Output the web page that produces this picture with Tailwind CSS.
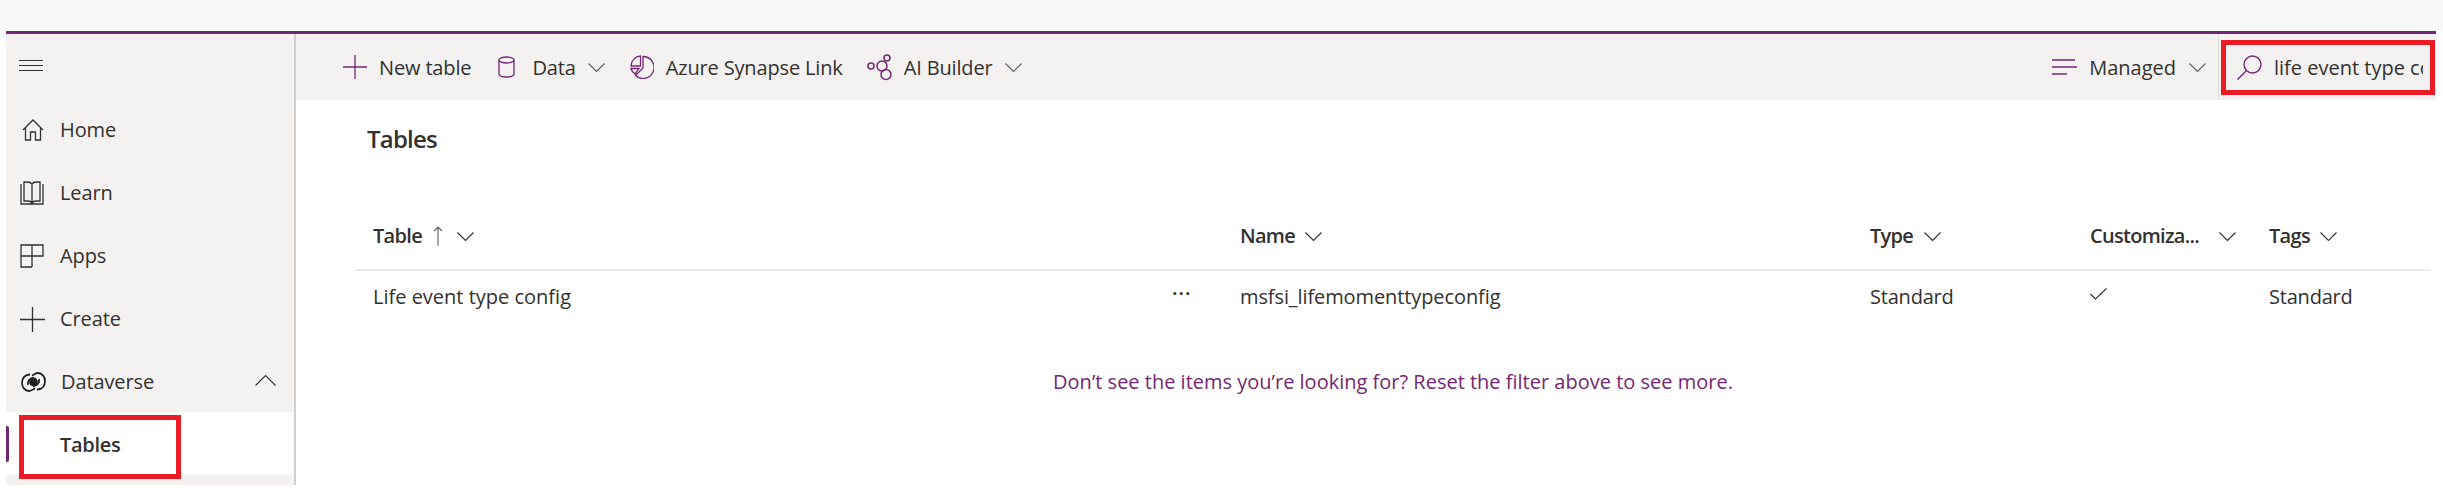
<!DOCTYPE html>
<html>
<head>
<meta charset="utf-8">
<script src="https://cdn.jsdelivr.net/npm/@tailwindcss/browser@4"></script>
</head>
<body class="bg-white">
<div class="relative w-[2443px] h-[489px] overflow-hidden bg-white text-[#323130] font-['Open_Sans','Noto_Sans',sans-serif] text-[20px] leading-[28px]">
  <div class="h-[31px] bg-[#f8f8f8]"></div>
  <div class="ml-[6px] mr-[7px] h-[3px] bg-[#742774]"></div>
  <div class="flex h-[451px] ml-[6px] mr-[7px]">
    <!-- sidebar -->
    <aside class="w-[290px] shrink-0 bg-[#f3f2f1] border-r-2 border-[#d2d0ce] flex flex-col">
      <div class="h-[63px] pl-[13px] flex items-center">
        <svg width="24" height="12" viewBox="0 0 24 12" fill="none" stroke="#323130" stroke-width="1"><path d="M0 .5h24M0 5.500h24M0 10.500h24"/></svg>
      </div>
      <div class="h-[63px] pt-[3px] flex items-center pl-[16px] gap-[16px]">
        <svg class="w-[22px] h-[22px]" viewBox="0 0 22 22" fill="none" stroke="#323130" stroke-width="1.300"><path d="M1 11 11 1l10 10M3.500 9v12h5v-8h5v8h5V9"/></svg>
        <span class="tracking-[-0.1px]">Home</span>
      </div>
      <div class="h-[63px] pt-[3px] flex items-center pl-[14px] gap-[16px]">
        <svg class="w-[24px] h-[24px]" viewBox="0 0 24 24" fill="none" stroke="#323130" stroke-width="1.300"><path d="M1 3v20h22V3M4 1v19h4c2 0 3 .7 4 2 1-1.300 2-2 4-2h4V1h-4c-2 0-3 .7-4 2-1-1.300-2-2-4-2H4ZM12 3v19"/></svg>
        <span class="tracking-[-0.1px]">Learn</span>
      </div>
      <div class="h-[63px] pt-[3px] flex items-center pl-[14px] gap-[16px]">
        <svg class="w-[24px] h-[24px]" viewBox="0 0 24 24" fill="none" stroke="#323130" stroke-width="1.300"><path d="M1 1h22v11H1zM12 1v22M1 12v11h11"/></svg>
        <span class="tracking-[-0.1px]">Apps</span>
      </div>
      <div class="h-[63px] pt-[3px] flex items-center pl-[14px] gap-[15px]">
        <svg class="w-[25px] h-[25px]" viewBox="0 0 25 25" fill="none" stroke="#323130" stroke-width="1.300"><path d="M12.500 0v25M0 12.500h25"/></svg>
        <span class="tracking-[-0.1px]">Create</span>
      </div>
      <div class="h-[63px] pt-[3px] flex items-center pl-[15px] gap-[15px] relative">
        <svg class="w-[25px] h-[20px]" viewBox="0 0 25 20" fill="none" stroke="#201f1e" stroke-width="1.800"><path d="M9 2.500C4 2.500 1 6 1 11c0 4.500 3 8 7 8 3.500 0 4.500-2.500 6-2.500"/><path d="M16 17.500c5 0 8-3.500 8-8.500 0-4.500-3-8-7-8-3.500 0-4.500 2.500-6 2.500"/><path d="M7 13c-1-4 2-7 6-7"/><path d="M18 7c1 4-2 7-6 7"/><circle cx="12.500" cy="10" r="3.500" fill="#201f1e"/></svg>
        <span class="tracking-[-0.1px]">Dataverse</span>
        <svg class="ml-auto mr-[18px] mb-[3px] w-[21px] h-[11px]" viewBox="0 0 21 11" fill="none" stroke="#323130" stroke-width="1.100"><path d="M.5 10.500 10.500.5l10 10"/></svg>
      </div>
      <div class="relative h-[63px] pt-[3px] bg-white rounded-[2px] flex items-center pl-[54px] font-semibold tracking-[-0.3px]">
        <span class="absolute left-0 top-[14px] w-[3px] h-[36px] bg-[#742774] rounded-r-[2px]"></span>
        Tables
      </div>
      <div class="h-[10px]"></div>
    </aside>
    <!-- main -->
    <main class="flex-1 flex flex-col min-w-0">
      <div class="h-[66px] bg-[#f3f2f1] flex items-center pl-[47px] whitespace-nowrap tracking-[-0.15px]">
        <svg class="w-[24px] h-[24px]" viewBox="0 0 24 24" fill="none" stroke="#742774" stroke-width="1.300"><path d="M12 0v24M0 12h24"/></svg>
        <span class="ml-[12px] pt-[1px]">New table</span>
        <svg class="ml-[27px] w-[17px] h-[22px]" viewBox="0 0 17 22" fill="none" stroke="#742774" stroke-width="1.300"><path d="M1 4v14c0 4 15 4 15 0V4"/><ellipse cx="8.500" cy="4" rx="7.500" ry="3"/></svg>
        <span class="ml-[17px] pt-[1px]">Data</span>
        <svg class="ml-[12px] w-[17px] h-[9px]" viewBox="0 0 17 9" fill="none" stroke="#605e5c" stroke-width="1.100"><path d="m.5.500 8 8 8-8"/></svg>
        <svg class="ml-[25px] w-[24px] h-[24px]" viewBox="0 0 24 24" fill="none" stroke="#742774" stroke-width="1.300"><path d="M13 1.500A11 11 0 1 1 5.500 20.500L13 13ZM1 11A10 10 0 0 1 10.500 1v10ZM1 13.500h8L5 19c-2-1.500-3.500-3-4-5.500Z"/></svg>
        <span class="ml-[12px] pt-[1px]">Azure Synapse Link</span>
        <svg class="ml-[24px] w-[25px] h-[27px]" viewBox="0 0 25 27" fill="none" stroke="#742774" stroke-width="1.500"><circle cx="4" cy="12" r="3"/><circle cx="20" cy="4" r="3"/><circle cx="15" cy="12" r="5"/><circle cx="19" cy="20.500" r="5"/></svg>
        <span class="ml-[12px] pt-[1px]">AI Builder</span>
        <svg class="ml-[12px] w-[17px] h-[9px]" viewBox="0 0 17 9" fill="none" stroke="#605e5c" stroke-width="1.100"><path d="m.5.500 8 8 8-8"/></svg>
        <div class="ml-auto flex items-center h-full">
          <svg class="w-[25px] h-[16px]" viewBox="0 0 25 16" fill="none" stroke="#742774" stroke-width="1.300"><path d="M0 1h23M0 8h25M0 15h15"/></svg>
          <span class="ml-[12px] pt-[1px] tracking-[0px]">Managed</span>
          <svg class="ml-[13px] w-[17px] h-[9px]" viewBox="0 0 17 9" fill="none" stroke="#605e5c" stroke-width="1.100"><path d="m.5.500 8 8 8-8"/></svg>
          <div class="ml-[12px] w-[218px] h-full border-l border-[#e1dfdd] flex items-center pl-[18px]">
            <svg class="shrink-0 w-[25px] h-[25px]" viewBox="0 0 25 25" fill="none" stroke="#742774" stroke-width="1.400"><circle cx="15.500" cy="9.500" r="8.500"/><path d="M9.500 15.500.5 24.500"/></svg>
            <span class="ml-[12px] pt-[1px] w-[149px] overflow-hidden tracking-[0px]">life event type config</span>
          </div>
        </div>
      </div>
      <div class="flex-1 pl-[59px] pr-[5px] flex flex-col">
        <h1 class="mt-[25px] ml-[12px] h-[28px] text-[24px] leading-[28px] font-semibold tracking-[-0.8px]">Tables</h1>
        <div class="mt-[52px] grid grid-cols-[867px_630px_220px_179px_1fr] h-[66px] items-center border-b-2 border-[#edebe9] pl-[18px] font-semibold tracking-[-0.7px] pb-[2px]">
          <div class="flex items-center">Table
            <svg class="ml-[11px] w-[10px] h-[20px]" viewBox="0 0 10 20" fill="none" stroke="#605e5c" stroke-width="1.100"><path d="M5 20V1M1 5l4-4 4 4"/></svg>
            <svg class="ml-[14px] w-[17px] h-[9px]" viewBox="0 0 17 9" fill="none" stroke="#323130" stroke-width="1.100"><path d="m.5.500 8 8 8-8"/></svg>
          </div>
          <div class="flex items-center">Name
            <svg class="ml-[10px] w-[17px] h-[9px]" viewBox="0 0 17 9" fill="none" stroke="#323130" stroke-width="1.100"><path d="m.5.500 8 8 8-8"/></svg>
          </div>
          <div class="flex items-center">Type
            <svg class="ml-[11px] w-[17px] h-[9px]" viewBox="0 0 17 9" fill="none" stroke="#323130" stroke-width="1.100"><path d="m.5.500 8 8 8-8"/></svg>
          </div>
          <div class="flex items-center">Customiza...
            <svg class="ml-[20px] w-[17px] h-[9px]" viewBox="0 0 17 9" fill="none" stroke="#323130" stroke-width="1.100"><path d="m.5.500 8 8 8-8"/></svg>
          </div>
          <div class="flex items-center">Tags
            <svg class="ml-[10px] w-[17px] h-[9px]" viewBox="0 0 17 9" fill="none" stroke="#323130" stroke-width="1.100"><path d="m.5.500 8 8 8-8"/></svg>
          </div>
        </div>
        <div class="grid grid-cols-[867px_630px_220px_179px_1fr] h-[52px] items-center pl-[18px]">
          <div class="relative">Life event type config
            <span class="absolute left-[799px] top-[-3px] tracking-[1px] text-[#323130] font-semibold">···</span>
          </div>
          <div class="tracking-[-0.1px]">msfsi_lifemomenttypeconfig</div>
          <div class="tracking-[-0.2px]">Standard</div>
          <div><svg class="w-[17px] h-[12px] mb-[6px]" viewBox="0 0 17 12" fill="none" stroke="#323130" stroke-width="1.100"><path d="m.5 6 5 5L16.500.5"/></svg></div>
          <div class="tracking-[-0.2px]">Standard</div>
        </div>
        <div class="mt-[45px] text-center text-[#742774]">Don’t see the items you’re looking for? Reset the filter above to see more.</div>
      </div>
    </main>
  </div>
  <!-- annotation boxes -->
  <div class="absolute left-[19px] top-[415px] w-[162px] h-[64px] border-[5px] border-[#ed1c24]"></div>
  <div class="absolute left-[2221px] top-[40px] w-[214px] h-[55px] border-[5px] border-[#ed1c24]"></div>
</div>
</body>
</html>
